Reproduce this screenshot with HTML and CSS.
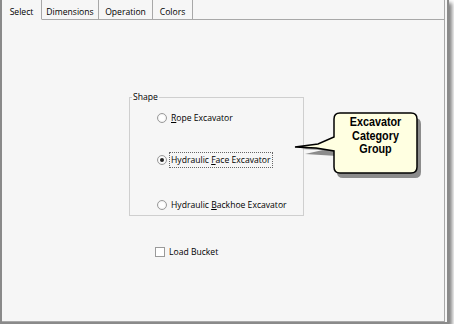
FILE: index.html
```
<!DOCTYPE html>
<html lang="en">
<head>
    <meta charset="UTF-8" />
    <title>Excavator Shape</title>
    <link rel="stylesheet" href="styles.css">
</head>
<body>

<div class="window">
    <!-- Tab strip -->
    <div class="tabs">
        <div class="tab tab-select active">Select</div>
        <div class="tab tab-dimensions">Dimensions</div>
        <div class="tab tab-operation">Operation</div>
        <div class="tab tab-colors">Colors</div>
        <div class="tab-fill"></div>
    </div>

    <!-- Select page -->
    <div class="panel">
        <fieldset class="group">
            <legend>Shape</legend>
            <div class="radio-row"><span class="radio"></span><span><u>R</u>ope Excavator</span></div>
            <div class="radio-row"><span class="radio checked"></span><span class="focus">Hydraulic <u>F</u>ace Excavator</span></div>
            <div class="radio-row"><span class="radio"></span><span>Hydraulic <u>B</u>ackhoe Excavator</span></div>
        </fieldset>

        <div class="check-row"><span class="check"></span><span>Load Bucket</span></div>
    </div>

    <!-- Callout over the page -->
    <div class="callout">
        <svg width="130" height="72" viewBox="0 0 130 72">
            <path d="M48 6 H120 Q126 6 126 12 V60 Q126 66 120 66 H48 Q42 66 42 60 V44 L10 42 L28 38 L6 37 L42 30 V12 Q42 6 48 6 Z" fill="#8c8c8c" transform="translate(3 3)"/>
            <path d="M48 4 H119 Q125 4 125 10 V58 Q125 64 119 64 H48 Q42 64 42 58 V42 L24 39 L3 38 L26 35 L42 28 V10 Q42 4 48 4 Z" fill="#ffffe1" stroke="#000" stroke-width="1.5"/>
        </svg>
        <div class="callout-text">Excavator<br>Category<br>Group</div>
    </div>
</div>

</body>
</html>
```

FILE: styles.css
```
body {
    margin: 0;
    background: #ffffff;
    font-family: "Open Sans", Arial, sans-serif;
    font-size: 8.6px;
    color: #000;
}
.window {
    position: relative;
    width: 445px;
    height: 322px;
    display: flex;
    flex-direction: column;
    background: #f6f6f6;
    border-left: 2px solid #8a8a8a;
    border-right: 2px solid #8a8a8a;
    border-bottom: 2px solid #8a8a8a;
    box-shadow: 3px 3px 4px rgba(0, 0, 0, 0.5);
}
.tabs {
    display: flex;
    height: 20px;
}
.tab {
    padding-top: 5px;
    line-height: 15px;
    text-align: center;
    border-right: 1px solid #a8a8a8;
    border-bottom: 1px solid #a8a8a8;
    box-sizing: border-box;
}
.tab.active {
    border-bottom: 1px solid transparent;
}
.tab-select { width: 40px; }
.tab-dimensions { width: 57px; }
.tab-operation { width: 54px; }
.tab-colors { width: 40px; }
.tab-fill {
    flex: 1;
    border-bottom: 1px solid #a8a8a8;
    border-right: 1px solid #a8a8a8;
    margin-right: 2px;
}
.panel {
    flex: 1;
    margin-right: 2px;
    border-right: 1px solid #a8a8a8;
    border-bottom: 1px solid #a8a8a8;
    padding: 71px 0 0 127px;
}
.group {
    width: 175px;
    height: 125px;
    margin: 0;
    padding: 8px 0 0 27px;
    border: 1px solid #cfcfcf;
    box-sizing: border-box;
    display: flex;
    flex-direction: column;
    gap: 28px;
}
.group legend {
    padding: 0 1px;
    margin-left: -25px;
}
.radio-row, .check-row {
    display: flex;
    align-items: center;
    gap: 4px;
    height: 14px;
}
.radio-row:last-child {
    margin-top: 3px;
}
.radio {
    width: 8px;
    height: 8px;
    border-radius: 50%;
    border: 1px solid #9a9a9a;
    background: radial-gradient(circle, #ffffff 40%, #e4e4e4 100%);
    position: relative;
}
.radio.checked::after {
    content: "";
    position: absolute;
    left: 2px;
    top: 2px;
    width: 4px;
    height: 4px;
    border-radius: 50%;
    background: #222;
}
.focus {
    outline: 1px dotted #666;
    outline-offset: 1px;
}
.check-row {
    margin: 29px 0 0 26px;
}
.check {
    width: 8px;
    height: 8px;
    border: 1px solid #9a9a9a;
    background: #fff;
}
.callout {
    position: absolute;
    left: 290px;
    top: 109px;
    width: 130px;
    height: 72px;
}
.callout svg {
    display: block;
}
.callout-text {
    position: absolute;
    left: 42px;
    top: 7px;
    width: 83px;
    text-align: center;
    font-family: "Liberation Sans", Arial, sans-serif;
    font-weight: bold;
    font-size: 12px;
    line-height: 13.5px;
    transform: scaleX(0.9);
}
```
